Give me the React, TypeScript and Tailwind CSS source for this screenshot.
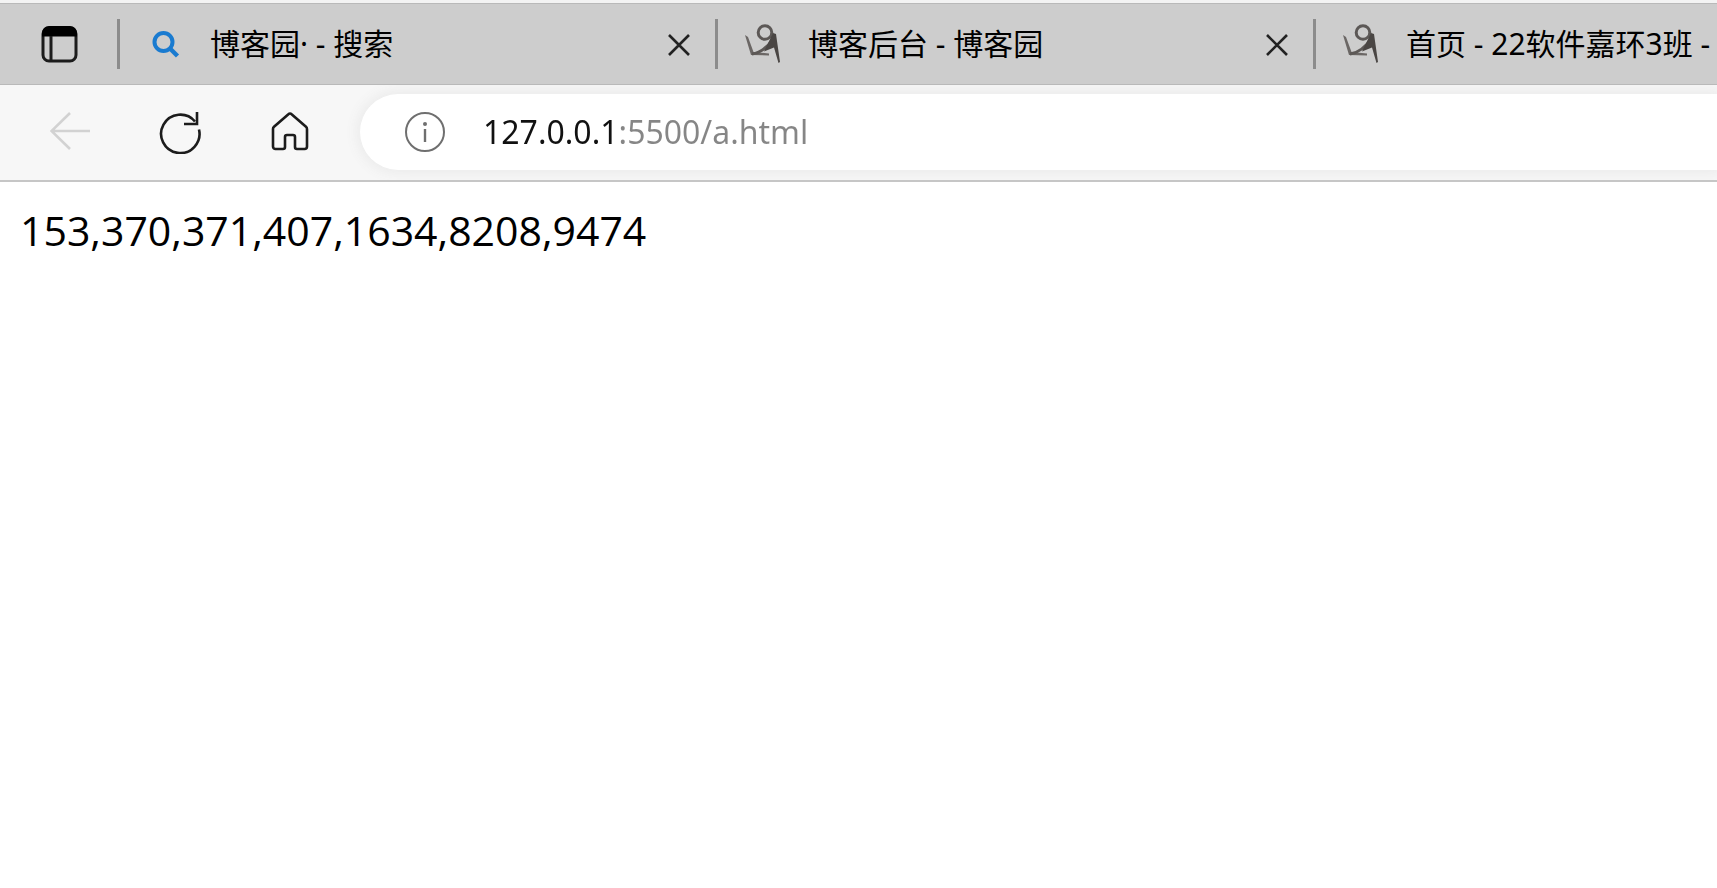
function TabsIcon() {
    return (
        <svg className="w-10 h-10" viewBox="0 0 40 40" fill="none">
            <rect x="4" y="4" width="33" height="33" rx="6" stroke="#1c1c1c" strokeWidth="3" />
            <path d="M3 12.5V9a7 7 0 0 1 7-7h21a7 7 0 0 1 7 7v3.5z" fill="#000" />
            <path d="M12 12v25" stroke="#1c1c1c" strokeWidth="3" />
        </svg>
    );
}

function SearchIcon() {
    return (
        <svg className="w-10 h-10 shrink-0" viewBox="0 0 40 40" fill="none" stroke="#1a7bd0">
            <circle cx="16.5" cy="18" r="9" strokeWidth="4" />
            <path d="M22.5 24l8 8" strokeWidth="4.4" />
        </svg>
    );
}

function BlogIcon() {
    return (
        <svg className="w-10 h-10 shrink-0" viewBox="0 0 40 40" fill="none">
            <circle cx="20" cy="8.5" r="6.8" stroke="#5c5856" strokeWidth="3" />
            <path d="M0 11L3 13L8.5 28L24 29.5V31.5L6 31z" fill="#6b6765" />
            <path d="M7 30c8-1 15-6 22-16" stroke="#5c5856" strokeWidth="3" />
            <path d="M28 9l3 1 4 28-1.5 1L29 23.5l-10 4z" fill="#4a4644" />
        </svg>
    );
}

function CloseIcon() {
    return (
        <svg className="w-6 h-6" viewBox="0 0 24 24" fill="none" stroke="#222" strokeWidth="2.6">
            <path d="M2 3l20 20M22 3L2 23" />
        </svg>
    );
}

function BackIcon() {
    return (
        <svg className="w-10 h-10" viewBox="0 0 40 40" fill="none" stroke="#d2d2d2" strokeWidth="2.6">
            <path d="M40 19H1M20 1L1.5 19L20 37" />
        </svg>
    );
}

function ReloadIcon() {
    return (
        <svg className="w-11 h-11" viewBox="0 0 44 44" fill="none" stroke="#1c1c1c" strokeWidth="2.6">
            <path d="M41 19.500A19.200 19.200 0 1 1 37 11.500" />
            <path d="M39 2v12H26" />
        </svg>
    );
}

function HomeIcon() {
    return (
        <svg className="w-10 h-10" viewBox="0 0 40 40" fill="none" stroke="#1c1c1c" strokeWidth="2.6" strokeLinejoin="round">
            <path d="M18.7 2a1.8 1.8 0 0 1 2.600 0L36 14.8a3 3 0 0 1 1 2.300V34.500a2.500 2.500 0 0 1-2.500 2.500H27a2 2 0 0 1-2-2V25a2 2 0 0 0-2-2h-6a2 2 0 0 0-2 2v10a2 2 0 0 1-2 2H5.500a2.500 2.500 0 0 1-2.500-2.500V17.100a3 3 0 0 1 1-2.300z" />
        </svg>
    );
}

function InfoIcon() {
    return (
        <svg className="w-10 h-10" viewBox="0 0 40 40" fill="none" stroke="#6f6f6f">
            <circle cx="20" cy="20" r="19" strokeWidth="2" />
            <path d="M20 17v13" strokeWidth="2.4" />
            <circle cx="20" cy="12" r="2" fill="#6f6f6f" stroke="none" />
        </svg>
    );
}

const tabs = [
    { title: "博客园· - 搜索", icon: <SearchIcon /> },
    { title: "博客后台 - 博客园", icon: <BlogIcon /> },
    { title: "首页 - 22软件嘉环3班 -", icon: <BlogIcon /> },
];

function App() {
    return (
        <div className="min-h-screen bg-white text-black">
            <header className="border-t-3 border-[#f3f3f3]">
                <nav className="flex items-center h-[82px] overflow-hidden bg-[#cdcdcd] border-y border-[#b9b9b9]">
                    <button aria-label="标签" className="flex justify-center shrink-0 w-[117px]">
                        <TabsIcon />
                    </button>
                    {tabs.map((tab) => (
                        <div key={tab.title} className="flex items-center shrink-0 w-[598px] h-[50px] border-l-3 border-[#8c8c8c] pl-[27px] pr-6">
                            {tab.icon}
                            <a href="#" className="flex-1 ml-[23px] whitespace-nowrap text-[30px] leading-[46px] font-['Noto_Sans','Noto_Sans_CJK_SC',sans-serif]">
                                {tab.title}
                            </a>
                            <button aria-label="关闭">
                                <CloseIcon />
                            </button>
                        </div>
                    ))}
                </nav>

                <div className="flex items-center h-[97px] pb-px overflow-hidden bg-[#f7f7f7] border-b-2 border-[#c6c6c6]">
                    <div className="flex items-center shrink-0 gap-[68px] px-[50px]">
                        <button aria-label="后退" disabled>
                            <BackIcon />
                        </button>
                        <button aria-label="刷新">
                            <ReloadIcon />
                        </button>
                        <button aria-label="主页">
                            <HomeIcon />
                        </button>
                    </div>
                    <div className="flex items-center flex-1 h-[76px] pl-[45px] rounded-l-full bg-white shadow-[0_0_12px_4px_#ececec]">
                        <button aria-label="网站信息">
                            <InfoIcon />
                        </button>
                        {/* host part is dark, the rest of the address is grey */}
                        <input
                            aria-label="地址"
                            type="text"
                            defaultValue="127.0.0.1:5500/a.html"
                            className="flex-1 min-w-0 ml-[38px] outline-none text-[32px] leading-[50px] font-['Noto_Sans',sans-serif] text-transparent bg-clip-text bg-[linear-gradient(to_right,#111_136px,#868686_136px)]"
                        />
                    </div>
                </div>
            </header>

            <main className="px-5 py-[18px]">
                <p className="text-[41px] leading-[60px] font-['Open_Sans',sans-serif]">153,370,371,407,1634,8208,9474</p>
            </main>
        </div>
    );
}

export default App;
